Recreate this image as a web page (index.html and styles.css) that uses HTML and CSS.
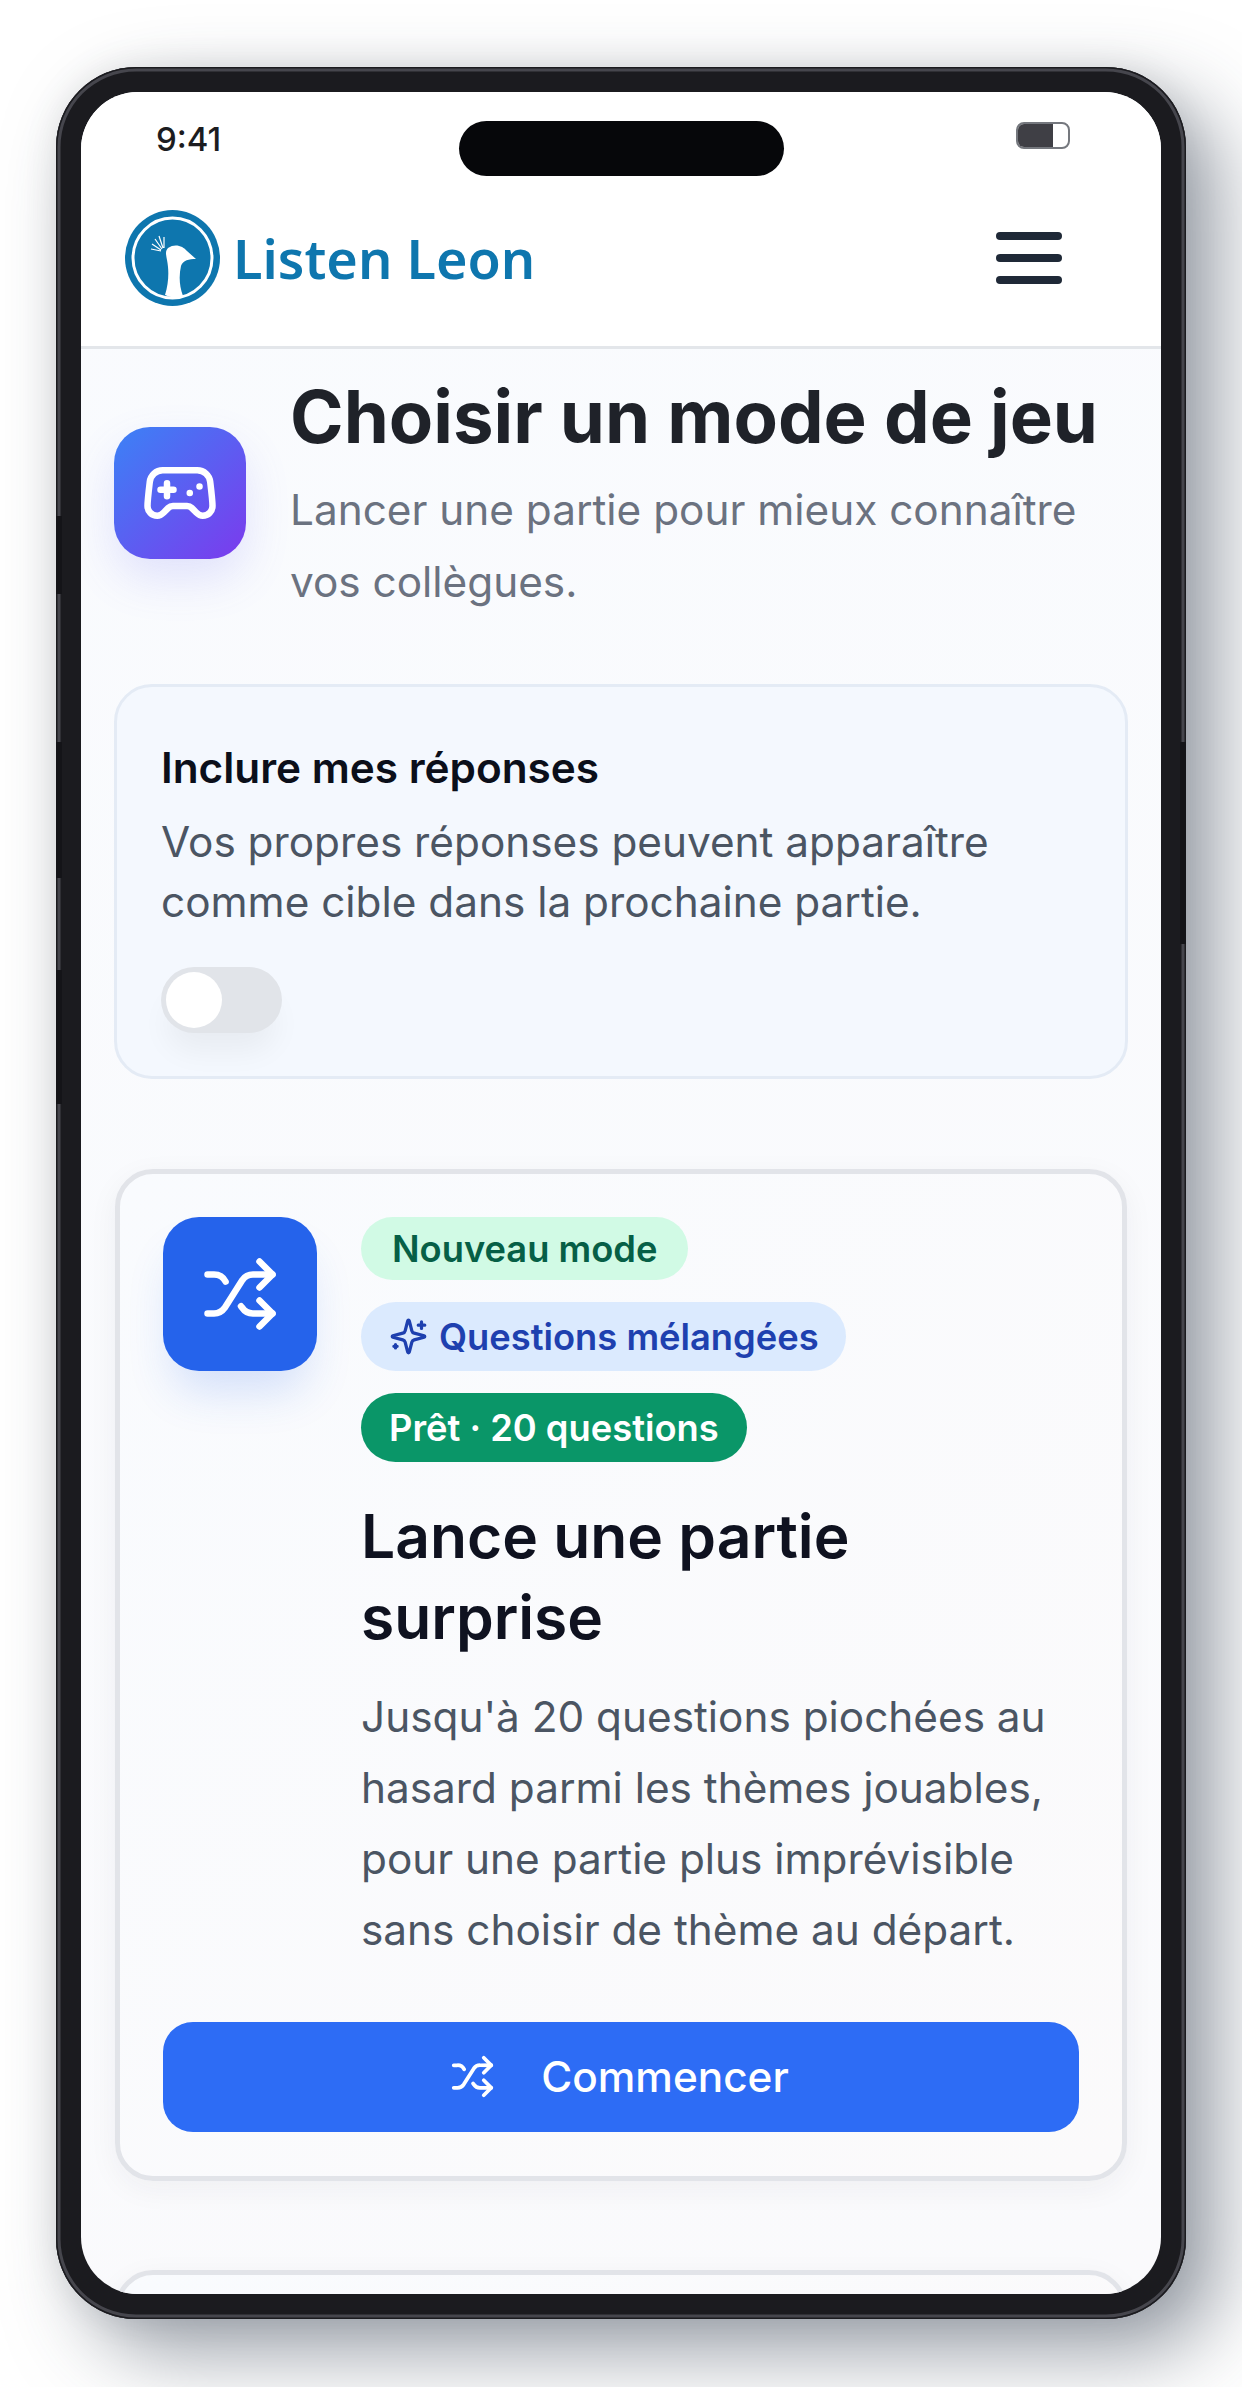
FILE: index.html
```html
<!DOCTYPE html>
<html lang="fr">
<head>
  <meta charset="UTF-8" />
  <meta name="viewport" content="width=device-width, initial-scale=1.0"/>
  <title>Listen Leon</title>
  <link rel="stylesheet" href="styles.css">
</head>
<body>

  <div class="phone">
    <span class="rail rail-l1"></span>
    <span class="rail rail-l2"></span>
    <span class="rail rail-l3"></span>
    <span class="rail rail-r1"></span>

    <div class="screen">
      <div class="notch"></div>

      <div class="status-bar">
        <span class="time">9:41</span>
        <span class="battery"><span class="battery-fill"></span></span>
      </div>

      <header class="nav">
        <div class="brand">
          <svg class="brand-logo" viewBox="0 0 95 96">
            <ellipse cx="47.5" cy="48" rx="47.5" ry="48" fill="#0e76ae"/>
            <ellipse cx="47.5" cy="48" rx="39.5" ry="40" fill="none" stroke="#fff" stroke-width="3"/>
            <path d="M43 38C50 33 58 36 62 41L71 49C64 49 58 50 56 56C54 65 54 75 58 86C52 88 46 88 40 85C44 72 44 60 42 50C41 45 40 41 43 38Z" fill="#fff"/>
            <path d="M36 41L26 39M36 40L27 34M37 39L30 29M38 38L34 26M39 38L39 27" stroke="#fff" stroke-width="1.2" fill="none"/>
          </svg>
          <span class="brand-name">Listen Leon</span>
        </div>
        <div class="burger"><span></span><span></span><span></span></div>
      </header>

      <main class="content">
        <section class="page-head">
          <div class="page-icon">
            <svg viewBox="0 0 24 24" class="line-icon page-icon-svg">
              <path d="M6 11h4M8 9v4M15 12h.01M18 10h.01"/>
              <path d="M17.32 5H6.68a4 4 0 0 0-3.978 3.59c-.006.052-.01.101-.017.152C2.604 9.416 2 14.456 2 16a3 3 0 0 0 3 3c1 0 1.5-.5 2-1l1.414-1.414A2 2 0 0 1 9.828 16h4.344a2 2 0 0 1 1.414.586L17 18c.5.5 1 1 2 1a3 3 0 0 0 3-3c0-1.545-.604-6.584-.685-7.258-.007-.05-.011-.1-.017-.151A4 4 0 0 0 17.32 5z"/>
            </svg>
          </div>
          <div class="page-text">
            <h1>Choisir un mode de jeu</h1>
            <p>Lancer une partie pour mieux connaître vos collègues.</p>
          </div>
        </section>

        <section class="option-card">
          <h2>Inclure mes réponses</h2>
          <p>Vos propres réponses peuvent apparaître comme cible dans la prochaine partie.</p>
          <div class="toggle"><span class="knob"></span></div>
        </section>

        <section class="mode-card">
          <div class="mode-top">
            <div class="mode-icon">
              <svg viewBox="0 0 24 24" class="line-icon mode-icon-svg">
                <path d="m18 14 4 4-4 4M18 2l4 4-4 4"/>
                <path d="M2 18h1.973a4 4 0 0 0 3.3-1.7l5.454-8.6a4 4 0 0 1 3.3-1.7H22"/>
                <path d="M2 6h1.972a4 4 0 0 1 3.6 2.2M22 18h-6.041a4 4 0 0 1-3.3-1.8l-.359-.45"/>
              </svg>
            </div>
            <div class="mode-body">
              <div class="pills">
                <span class="pill pill-new">Nouveau mode</span>
                <span class="pill pill-mix">
                  <svg viewBox="0 0 24 24" class="line-icon pill-svg">
                    <path d="M9.937 15.5A2 2 0 0 0 8.5 14.063l-6.135-1.582a.5.5 0 0 1 0-.962L8.5 9.936A2 2 0 0 0 9.937 8.5l1.582-6.135a.5.5 0 0 1 .963 0L14.063 8.5A2 2 0 0 0 15.5 9.937l6.135 1.581a.5.5 0 0 1 0 .964L15.5 14.063a2 2 0 0 0-1.437 1.437l-1.582 6.135a.5.5 0 0 1-.963 0z"/>
                    <path d="M20 3v4M22 5h-4M4 17v2M5 18H3"/>
                  </svg>
                  Questions mélangées
                </span>
                <span class="pill pill-ready">Prêt · 20 questions</span>
              </div>
              <h3>Lance une partie surprise</h3>
              <p>Jusqu'à 20 questions piochées au hasard parmi les thèmes jouables, pour une partie plus imprévisible sans choisir de thème au départ.</p>
            </div>
          </div>
          <button class="start">
            <svg viewBox="0 0 24 24" class="line-icon start-svg">
              <path d="m18 14 4 4-4 4M18 2l4 4-4 4"/>
              <path d="M2 18h1.973a4 4 0 0 0 3.3-1.7l5.454-8.6a4 4 0 0 1 3.3-1.7H22"/>
              <path d="M2 6h1.972a4 4 0 0 1 3.6 2.2M22 18h-6.041a4 4 0 0 1-3.3-1.8l-.359-.45"/>
            </svg>
            Commencer
          </button>
        </section>

        <section class="mode-card next-card"></section>
      </main>
    </div>
  </div>

</body>
</html>
```

FILE: styles.css
```css
* {
  box-sizing: border-box;
}

html, body {
  height: 2387px;
  overflow: hidden;
}

body {
  margin: 0;
  background: white;
  font-family: Inter, "Liberation Sans", sans-serif;
  padding: 67px 56px 0;
}

/* Device frame */
.phone {
  position: relative;
  width: 1130px;
  height: 2252px;
  padding: 25px;
  background: #1b1b1f;
  border-radius: 80px;
  box-shadow:
    inset 0 0 0 1.5px #1b1b1f,
    inset 0 0 0 4.5px #46464d,
    32px 32px 80px rgba(50, 62, 80, 0.5),
    0 0 36px rgba(0, 0, 0, 0.08);
}

.rail {
  position: absolute;
  width: 6px;
  background: #141418;
}

.rail-l1 { left: 0; top: 449px; height: 78px; }
.rail-l2 { left: 0; top: 675px; height: 136px; }
.rail-l3 { left: 0; top: 903px; height: 134px; }
.rail-r1 { right: 0; top: 675px; height: 202px; }

.screen {
  position: relative;
  height: 100%;
  overflow: hidden;
  border-radius: 57px;
  background: linear-gradient(160deg, #f9fbfe, #fafafc);
}

.notch {
  position: absolute;
  top: 29px;
  left: 378px;
  width: 325px;
  height: 55px;
  border-radius: 28px;
  background: #06070a;
}

.status-bar {
  height: 78px;
  background: white;
  display: flex;
  justify-content: space-between;
  align-items: flex-start;
  padding: 27px 91px 0 75px;
}

.time {
  font-size: 33px;
  font-weight: 500;
  line-height: 40px;
  color: #1c1c20;
}

.battery {
  display: block;
  width: 54px;
  height: 27px;
  margin-top: 3px;
  border: 2px solid #75787e;
  border-radius: 8px;
  overflow: hidden;
  background: white;
}

.battery-fill {
  display: block;
  width: 35px;
  height: 100%;
  background: #3f3f45;
}

.nav {
  height: 179px;
  padding: 0 99px 0 44px;
  background: white;
  border-bottom: 3px solid #e3e6ea;
  display: flex;
  justify-content: space-between;
  align-items: center;
}

.brand {
  display: flex;
  align-items: center;
  gap: 13px;
}

.brand-logo {
  width: 95px;
  height: 96px;
}

.brand-name {
  font-family: "Noto Sans", sans-serif;
  font-size: 54px;
  font-weight: 600;
  color: #0e76ae;
}

.burger {
  display: flex;
  flex-direction: column;
  gap: 14px;
}

.burger span {
  display: block;
  width: 66px;
  height: 8px;
  border-radius: 4px;
  background: #1f2937;
}

.line-icon {
  fill: none;
  stroke: currentColor;
  stroke-width: 2;
  stroke-linecap: round;
  stroke-linejoin: round;
}

/* Main column */
.content {
  padding: 23px 33px 0;
}

.page-head {
  display: flex;
  align-items: center;
  gap: 44px;
}

.page-icon {
  flex-shrink: 0;
  width: 132px;
  height: 132px;
  margin-bottom: 3px;
  border-radius: 36px;
  background: linear-gradient(135deg, #3b82f6, #7c3aed);
  box-shadow: 0 20px 45px rgba(99, 102, 241, 0.16);
  color: white;
  display: flex;
  align-items: center;
  justify-content: center;
}

.page-icon-svg {
  width: 78px;
  height: 78px;
}

.page-text h1 {
  margin: 0 0 12px;
  font-size: 72.5px;
  font-weight: 700;
  line-height: 90px;
  color: #1f2229;
  white-space: nowrap;
}

.page-text p {
  margin: 0;
  font-size: 42.3px;
  line-height: 71.5px;
  color: #6b7280;
}

.option-card {
  margin-top: 67px;
  padding: 51px 44px 41px;
  height: 395px;
  background: #f4f8fe;
  border: 3px solid #e4ebf5;
  border-radius: 38px;
}

.option-card h2 {
  margin: 0 0 14px;
  font-size: 42.3px;
  font-weight: 600;
  line-height: 60px;
  color: #0b0f1a;
}

.option-card p {
  margin: 0;
  font-size: 42.3px;
  line-height: 60px;
  color: #4b5563;
}

.toggle {
  position: relative;
  width: 121px;
  height: 66px;
  margin-top: 35px;
  border-radius: 33px;
  background: #e1e4e9;
  box-shadow: 0 24px 30px -6px rgba(0, 0, 0, 0.05);
}

.knob {
  position: absolute;
  top: 5px;
  left: 5px;
  width: 56px;
  height: 56px;
  border-radius: 50%;
  background: white;
}

.mode-card {
  margin: 90px 1px 0;
  padding: 43px 43px 44px;
  background: linear-gradient(135deg, #f9fbfe, #fbfafb);
  border: 5px solid #e2e4e9;
  border-radius: 38px;
  box-shadow: 0 8px 30px rgba(30, 40, 60, 0.05);
}

.next-card {
  margin-top: 89px;
  height: 200px;
}

.mode-top {
  display: flex;
  align-items: flex-start;
  gap: 44px;
}

.mode-icon {
  flex-shrink: 0;
  width: 154px;
  height: 154px;
  border-radius: 36px;
  background: #2563eb;
  box-shadow: 0 30px 45px -10px rgba(37, 99, 235, 0.18);
  color: white;
  display: flex;
  align-items: center;
  justify-content: center;
}

.mode-icon-svg {
  width: 78px;
  height: 78px;
}

.pills {
  display: flex;
  flex-direction: column;
  align-items: flex-start;
  gap: 22px;
}

.pill {
  display: inline-flex;
  align-items: center;
  height: 69px;
  padding: 0 28px;
  border-radius: 35px;
  font-size: 36.3px;
  font-weight: 600;
  white-space: nowrap;
}

.pill-new {
  height: 63px;
  padding: 0 31px;
  background: #d1fae5;
  color: #065f46;
}

.pill-mix {
  gap: 11px;
  padding-right: 27px;
  background: #dbeafe;
  color: #1e40af;
}

.pill-svg {
  width: 39px;
  height: 39px;
}

.pill-ready {
  background: #0a9668;
  color: white;
}

.mode-body h3 {
  margin: 34px 0 23px;
  font-size: 60.5px;
  font-weight: 600;
  line-height: 81px;
  color: #0f1220;
}

.mode-body p {
  margin: 0;
  font-size: 42.3px;
  line-height: 71px;
  color: #4b5563;
}

.start {
  width: 100%;
  height: 110px;
  margin-top: 57px;
  padding: 0 3px 2px 0;
  border: none;
  border-radius: 30px;
  background: #2d6cf5;
  color: white;
  font-family: inherit;
  font-size: 42.3px;
  font-weight: 500;
  display: flex;
  align-items: center;
  justify-content: center;
  gap: 46px;
}

.start-svg {
  width: 45px;
  height: 45px;
}
```
